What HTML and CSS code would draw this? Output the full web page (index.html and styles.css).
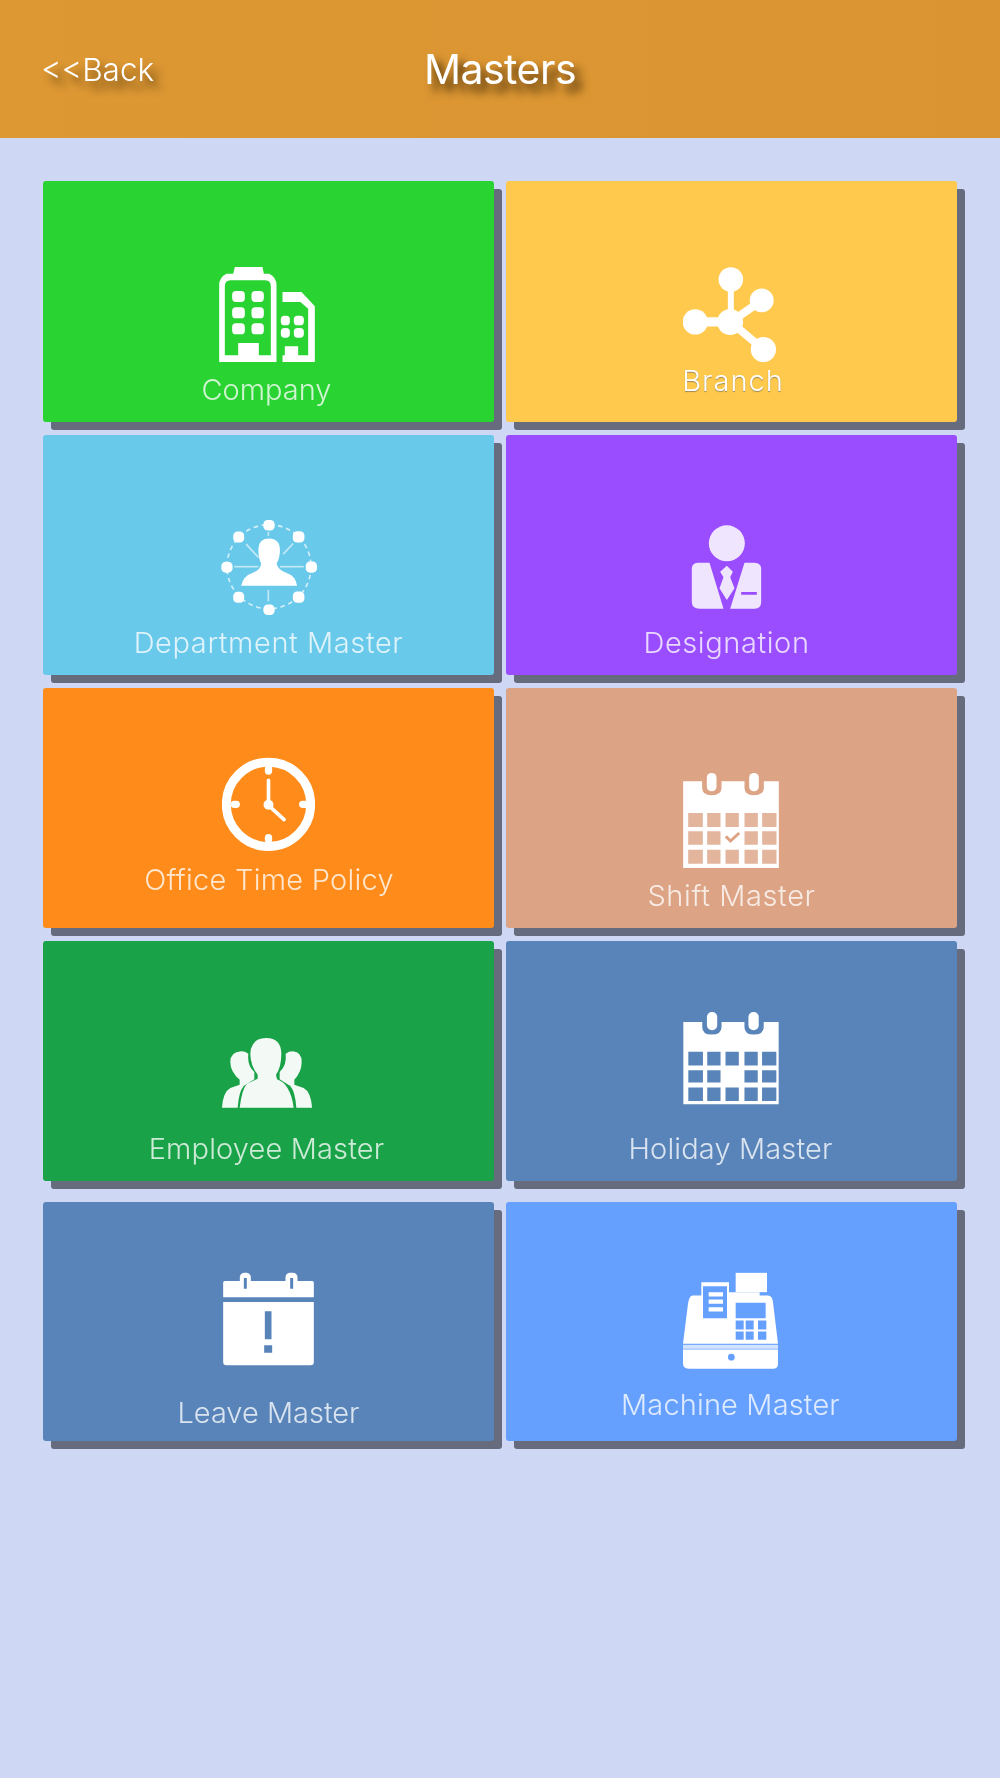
FILE: index.html
```html
<!DOCTYPE html>
<html lang="en">
<head>
    <meta charset="UTF-8">
    <meta name="viewport" content="width=device-width, initial-scale=1.0">
    <title>Masters</title>
    <link rel="stylesheet" href="styles.css">
</head>
<body>
    <header class="topbar">
        <a class="back-link">&lt;&lt;Back</a>
        <h1 class="page-title">Masters</h1>
    </header>

    <main class="tiles">
        <div class="tile tile-company">
            <svg class="icon icon-company" viewBox="118 80 287 285">
                <path fill-rule="evenodd" d="M165 80H248L252 100H268Q290 110 290 135V365H118V135Q118 110 140 100H160ZM135 138Q135 120 152 120H256Q273 120 273 138V345H237V308H175V345H135ZM168 152H184Q195 152 195 163V174Q195 185 184 185H168Q157 185 157 174V163Q157 152 168 152ZM226 152H241Q252 152 252 163V174Q252 185 241 185H226Q215 185 215 174V163Q215 152 226 152ZM168 201H184Q195 201 195 212V223Q195 234 184 234H168Q157 234 157 223V212Q157 201 168 201ZM226 201H241Q252 201 252 212V223Q252 234 241 234H226Q215 234 215 223V212Q215 201 226 201ZM168 249H184Q195 249 195 260V271Q195 282 184 282H168Q157 282 157 271V260Q157 249 168 249ZM226 249H241Q252 249 252 260V271Q252 282 241 282H226Q215 282 215 271V260Q215 249 226 249Z"/>
                <path d="M308 155H365L405 198V365H308V345H315V318H355V345H385V205L362 185H308Z"/>
                <rect x="303" y="226" width="27" height="29" rx="11"/>
                <rect x="342" y="226" width="30" height="29" rx="11"/>
                <rect x="303" y="263" width="27" height="29" rx="11"/>
                <rect x="342" y="263" width="30" height="29" rx="11"/>
            </svg>
            <span class="tile-label">Company</span>
        </div>
        <div class="tile tile-branch">
            <svg class="icon icon-branch" viewBox="128 80 280 285">
                <g class="spokes">
                    <line x1="272" y1="117" x2="272" y2="245" stroke-width="18"/>
                    <line x1="365" y1="180" x2="272" y2="245" stroke-width="24"/>
                    <line x1="165" y1="245" x2="272" y2="245" stroke-width="28"/>
                    <line x1="370" y1="328" x2="272" y2="245" stroke-width="24"/>
                </g>
                <circle cx="272" cy="117" r="37"/>
                <circle cx="365" cy="180" r="36"/>
                <circle cx="165" cy="245" r="38"/>
                <circle cx="370" cy="328" r="38"/>
                <circle cx="270" cy="245" r="39"/>
            </svg>
            <span class="tile-label">Branch</span>
        </div>

        <div class="tile tile-department">
            <svg class="icon icon-department" viewBox="122 60 290 285">
                <circle class="ring" cx="267" cy="200" r="127"/>
                <g class="thin">
                    <line x1="162" y1="200" x2="235" y2="200"/>
                    <line x1="300" y1="200" x2="372" y2="200"/>
                    <line x1="265" y1="270" x2="265" y2="305"/>
                    <line x1="198" y1="132" x2="235" y2="172"/>
                    <line x1="310" y1="162" x2="340" y2="130"/>
                    <line x1="265" y1="95" x2="265" y2="107"/>
                </g>
                <path d="M235 150Q235 115 267 115Q300 115 300 150Q300 175 290 190Q292 210 322 220Q347 228 352 258H183Q188 228 218 218Q243 210 243 190Q235 175 235 150Z"/>
                <rect x="250" y="59" width="34" height="32" rx="13"/>
                <rect x="339" y="93" width="35" height="34" rx="13"/>
                <rect x="378" y="184" width="34" height="34" rx="13"/>
                <rect x="339" y="275" width="35" height="34" rx="13"/>
                <rect x="250" y="314" width="34" height="32" rx="13"/>
                <rect x="159" y="276" width="33" height="33" rx="13"/>
                <rect x="123" y="185" width="34" height="33" rx="13"/>
                <rect x="159" y="94" width="33" height="33" rx="13"/>
            </svg>
            <span class="tile-label">Department Master</span>
        </div>
        <div class="tile tile-designation">
            <svg class="icon icon-designation" viewBox="155 75 212 255">
                <circle cx="262" cy="130" r="54"/>
                <path d="M175 188H210L252 326H180Q157 326 157 305V205Q157 190 175 188Z"/>
                <path fill-rule="evenodd" d="M315 188H345Q365 190 365 205V305Q365 326 345 326H272ZM305 276V284H352V276Z"/>
                <path d="M262 197L280 215L272 232L285 265L262 300L240 265L252 232L242 215Z"/>
            </svg>
            <span class="tile-label">Designation</span>
        </div>

        <div class="tile tile-office">
            <svg class="icon icon-office" viewBox="125 50 280 285">
                <circle class="clock-face" cx="265" cy="192" r="127"/>
                <g class="clock-marks">
                    <line x1="265" y1="85" x2="265" y2="92"/>
                    <line x1="265" y1="292" x2="265" y2="298"/>
                    <line x1="162" y1="192" x2="168" y2="192"/>
                    <line x1="368" y1="192" x2="374" y2="192"/>
                </g>
                <g class="clock-hands">
                    <line x1="265" y1="120" x2="265" y2="195"/>
                    <line x1="265" y1="195" x2="312" y2="238"/>
                </g>
                <circle cx="265" cy="193" r="15"/>
            </svg>
            <span class="tile-label">Office Time Policy</span>
        </div>
        <div class="tile tile-shift">
            <svg class="icon icon-shift" viewBox="128 70 287 285">
                <path d="M128 95H185V115Q185 137 213 137Q243 137 243 115V95H312V115Q312 137 340 137Q370 137 370 115V95H415V355H128Z"/>
                <rect x="199" y="70" width="29" height="55" rx="14"/>
                <rect x="326" y="70" width="29" height="55" rx="14"/>
                <path class="cut" d="M143 190h44v42h-44zM200 190h40v42h-40zM255 190h40v42h-40zM312 190h40v42h-40zM365 190h43v42h-43zM143 245h44v40h-44zM200 245h40v40h-40zM312 245h40v40h-40zM365 245h43v40h-43zM143 300h44v42h-44zM200 300h40v42h-40zM255 300h40v42h-40zM312 300h40v42h-40zM365 300h43v42h-43z"/>
                <path class="check" d="M256 260L270 274L296 250"/>
            </svg>
            <span class="tile-label">Shift Master</span>
        </div>

        <div class="tile tile-employee">
            <svg class="icon icon-employee" viewBox="125 88 270 210">
                <path d="M258 88Q302 88 303 135Q303 175 287 198L290 212Q330 225 340 297H178Q185 240 200 225L232 210L232 198Q210 170 210 135Q212 88 258 88Z"/>
                <path d="M182 128Q195 128 204 135Q200 170 222 190L222 212L190 232Q175 250 172 297H125Q128 250 150 238L178 228L178 213Q150 190 150 160Q150 130 182 128Z"/>
                <path d="M338 128Q325 128 316 135Q320 170 298 190L298 212L330 232Q345 250 348 297H395Q392 250 370 238L342 228L342 213Q364 190 364 160Q364 130 338 128Z"/>
            </svg>
            <span class="tile-label">Employee Master</span>
        </div>
        <div class="tile tile-holiday">
            <svg class="icon icon-holiday" viewBox="128 70 287 280">
                <path d="M128 100H185V115Q185 138 213 138Q243 138 243 115V100H312V115Q312 138 340 138Q370 138 370 115V100H415V348H128Z"/>
                <rect x="199" y="70" width="31" height="55" rx="15"/>
                <rect x="324" y="70" width="31" height="55" rx="15"/>
                <path class="cut" d="M143 190h44v41h-44zM200 190h40v41h-40zM255 190h40v41h-40zM312 190h40v41h-40zM365 190h43v41h-43zM143 245h44v37h-44zM200 245h40v37h-40zM312 245h40v37h-40zM365 245h43v37h-43zM143 297h44v41h-44zM200 297h40v41h-40zM255 297h40v41h-40zM312 297h40v41h-40zM365 297h43v41h-43z"/>
            </svg>
            <span class="tile-label">Holiday Master</span>
        </div>

        <div class="tile tile-leave">
            <svg class="icon icon-leave" viewBox="132 70 272 282">
                <path d="M132 102Q132 97 137 97H399Q404 97 404 102V146H132Z"/>
                <path d="M132 160H404V340Q404 350 394 350H142Q132 350 132 340Z"/>
                <rect x="182" y="72" width="33" height="48" rx="14"/>
                <rect x="319" y="72" width="36" height="48" rx="14"/>
                <path class="cut" d="M194 88h9v32h-9zM333 88h9v32h-9zM257 188h20v84h-20zM255 290h24v22h-24z"/>
            </svg>
            <span class="tile-label">Leave Master</span>
        </div>
        <div class="tile tile-machine">
            <svg class="icon icon-machine" viewBox="130 70 285 290">
                <rect x="288" y="72" width="94" height="58"/>
                <path d="M158 140H185V100H268V130H360V140H385Q398 140 400 160L415 285H130L145 165Q148 142 158 140Z"/>
                <path class="cut" d="M190 112h72v96h-72zM288 162h90v46h-90zM288 215h24v27h-24zM318 215h24v27h-24zM355 215h25v27h-25zM288 248h24v25h-24zM318 248h24v25h-24zM355 248h25v25h-25z"/>
                <path d="M207 130h43v13h-43zM207 152h43v13h-43zM207 175h43v13h-43z"/>
                <rect class="drawer-line" x="130" y="288" width="285" height="12"/>
                <path d="M130 302H415V345Q415 360 400 360H150Q130 360 130 345Z"/>
                <circle class="cut" cx="275" cy="325" r="10"/>
            </svg>
            <span class="tile-label">Machine Master</span>
        </div>
    </main>
</body>
</html>
```

FILE: styles.css
```css
body {
    margin: 0;
    min-height: 100vh;
    background-color: #ced8f5;
    font-family: Inter, "Liberation Sans", sans-serif;
    color: #fff;
}

.topbar {
    display: grid;
    grid-template-columns: 1fr auto 1fr;
    align-items: center;
    height: 138px;
    padding: 0 41px;
    background: linear-gradient(90deg, #dd9833, #da9432);
}
.back-link {
    font-size: 31.5px;
    font-weight: 300;
    text-shadow: 7px 8px 8px rgba(50, 30, 0, 0.7);
    filter: blur(0.7px);
}
.page-title {
    margin: 0;
    font-size: 41px;
    font-weight: 400;
    letter-spacing: -0.5px;
    text-shadow: 7px 8px 8px rgba(50, 30, 0, 0.85);
    filter: blur(0.7px);
}

/* grid of master tiles */
.tiles {
    display: grid;
    grid-template-columns: 451px 451px;
    grid-template-rows: 241px repeat(3, 240.5px) 247.5px;
    column-gap: 12px;
    row-gap: 12.6px;
    padding: 43px 43px 0;
}
.tile {
    display: flex;
    flex-direction: column;
    align-items: center;
    background: var(--tile);
    border-radius: 3px;
    box-shadow: 8px 8px 0 #666b7d;
}
.tile-label {
    font-size: 29px;
    font-weight: 300;
    letter-spacing: 0.15px;
    line-height: 32px;
    white-space: nowrap;
    color: rgba(255, 255, 255, 0.78);
    filter: blur(0.7px);
}
.icon {
    display: block;
    fill: #fff;
    filter: blur(0.7px);
}
.cut {
    fill: var(--tile);
}

/* each tile has its own colour and its icon and label sit a bit differently */
.tile-company { --tile: #29d332; padding: 86px 4px 0 0; }
.tile-company .tile-label { margin-top: 12px; letter-spacing: 0; }
.icon-company { width: 96px; height: 95px; }

.tile-branch { --tile: #ffc94d; padding: 86px 4px 0 0; }
.tile-branch .tile-label { margin: 3px 0 0 7px; letter-spacing: 1px; color: #fff; text-shadow: 0 1px 1px rgba(90, 90, 90, 0.6); }
.icon-branch { width: 93px; height: 95px; }

.tile-department { --tile: #69c9eb; padding: 85.5px 0 0 0; }
.tile-department .tile-label { margin-top: 12px; letter-spacing: 0.6px; }
.icon-department { width: 96px; height: 95px; }

.tile-designation { --tile: #9a4dff; padding: 90.5px 10px 0 0; }
.tile-designation .tile-label { margin-top: 17px; letter-spacing: 0.6px; }
.icon-designation { width: 71px; height: 85px; opacity: 0.86; }

.tile-office { --tile: #ff8c1a; padding: 69px 0 0 0; }
.tile-office .tile-label { margin: 12px 0 0 1px; letter-spacing: 0.25px; }
.icon-office { width: 93px; height: 95px; }

.tile-shift { --tile: #dca385; padding: 85px 2px 0 0; }
.tile-shift .tile-label { margin: 12.5px 0 0 2px; letter-spacing: 0.6px; }
.icon-shift { width: 96px; height: 95px; }
.tile-shift .cut { opacity: 0.8; }

.tile-employee { --tile: #19a247; padding: 97.5px 4px 0 0; }
.tile-employee .tile-label { margin-top: 25px; }
.icon-employee { width: 90px; height: 70px; opacity: 0.95; }

.tile-holiday { --tile: #5884b9; padding: 71.5px 2px 0 0; }
.tile-holiday .tile-label { margin-top: 28px; }
.icon-holiday { width: 96px; height: 93px; }

/* last row sits a little lower than the rest */
.tile-leave { --tile: #5884b9; padding: 70.5px 0 0 0; margin-top: 8px; }
.tile-leave .tile-label { margin-top: 30.5px; letter-spacing: 0; }
.icon-leave { width: 91px; height: 94px; }

.tile-machine { --tile: #66a0ff; padding: 70.5px 2px 0 0; margin-top: 8px; }
.tile-machine .tile-label { margin-top: 19.5px; }
.icon-machine { width: 95px; height: 97px; }

/* icon strokes */
.spokes line {
    stroke: #fff;
}
.ring {
    fill: none;
    stroke: #fff;
    stroke-width: 5;
    stroke-dasharray: 14 11;
    opacity: 0.7;
}
.thin line {
    stroke: #fff;
    stroke-width: 5;
    opacity: 0.6;
}
.clock-face {
    fill: none;
    stroke: #fff;
    stroke-width: 27;
}
.clock-marks line {
    stroke: #fff;
    stroke-width: 22;
    stroke-linecap: round;
}
.clock-hands line {
    stroke: #fff;
    stroke-width: 11;
    stroke-linecap: round;
}
.check {
    fill: none;
    stroke: #dca385;
    stroke-width: 9;
}
.drawer-line {
    opacity: 0.7;
}
```
